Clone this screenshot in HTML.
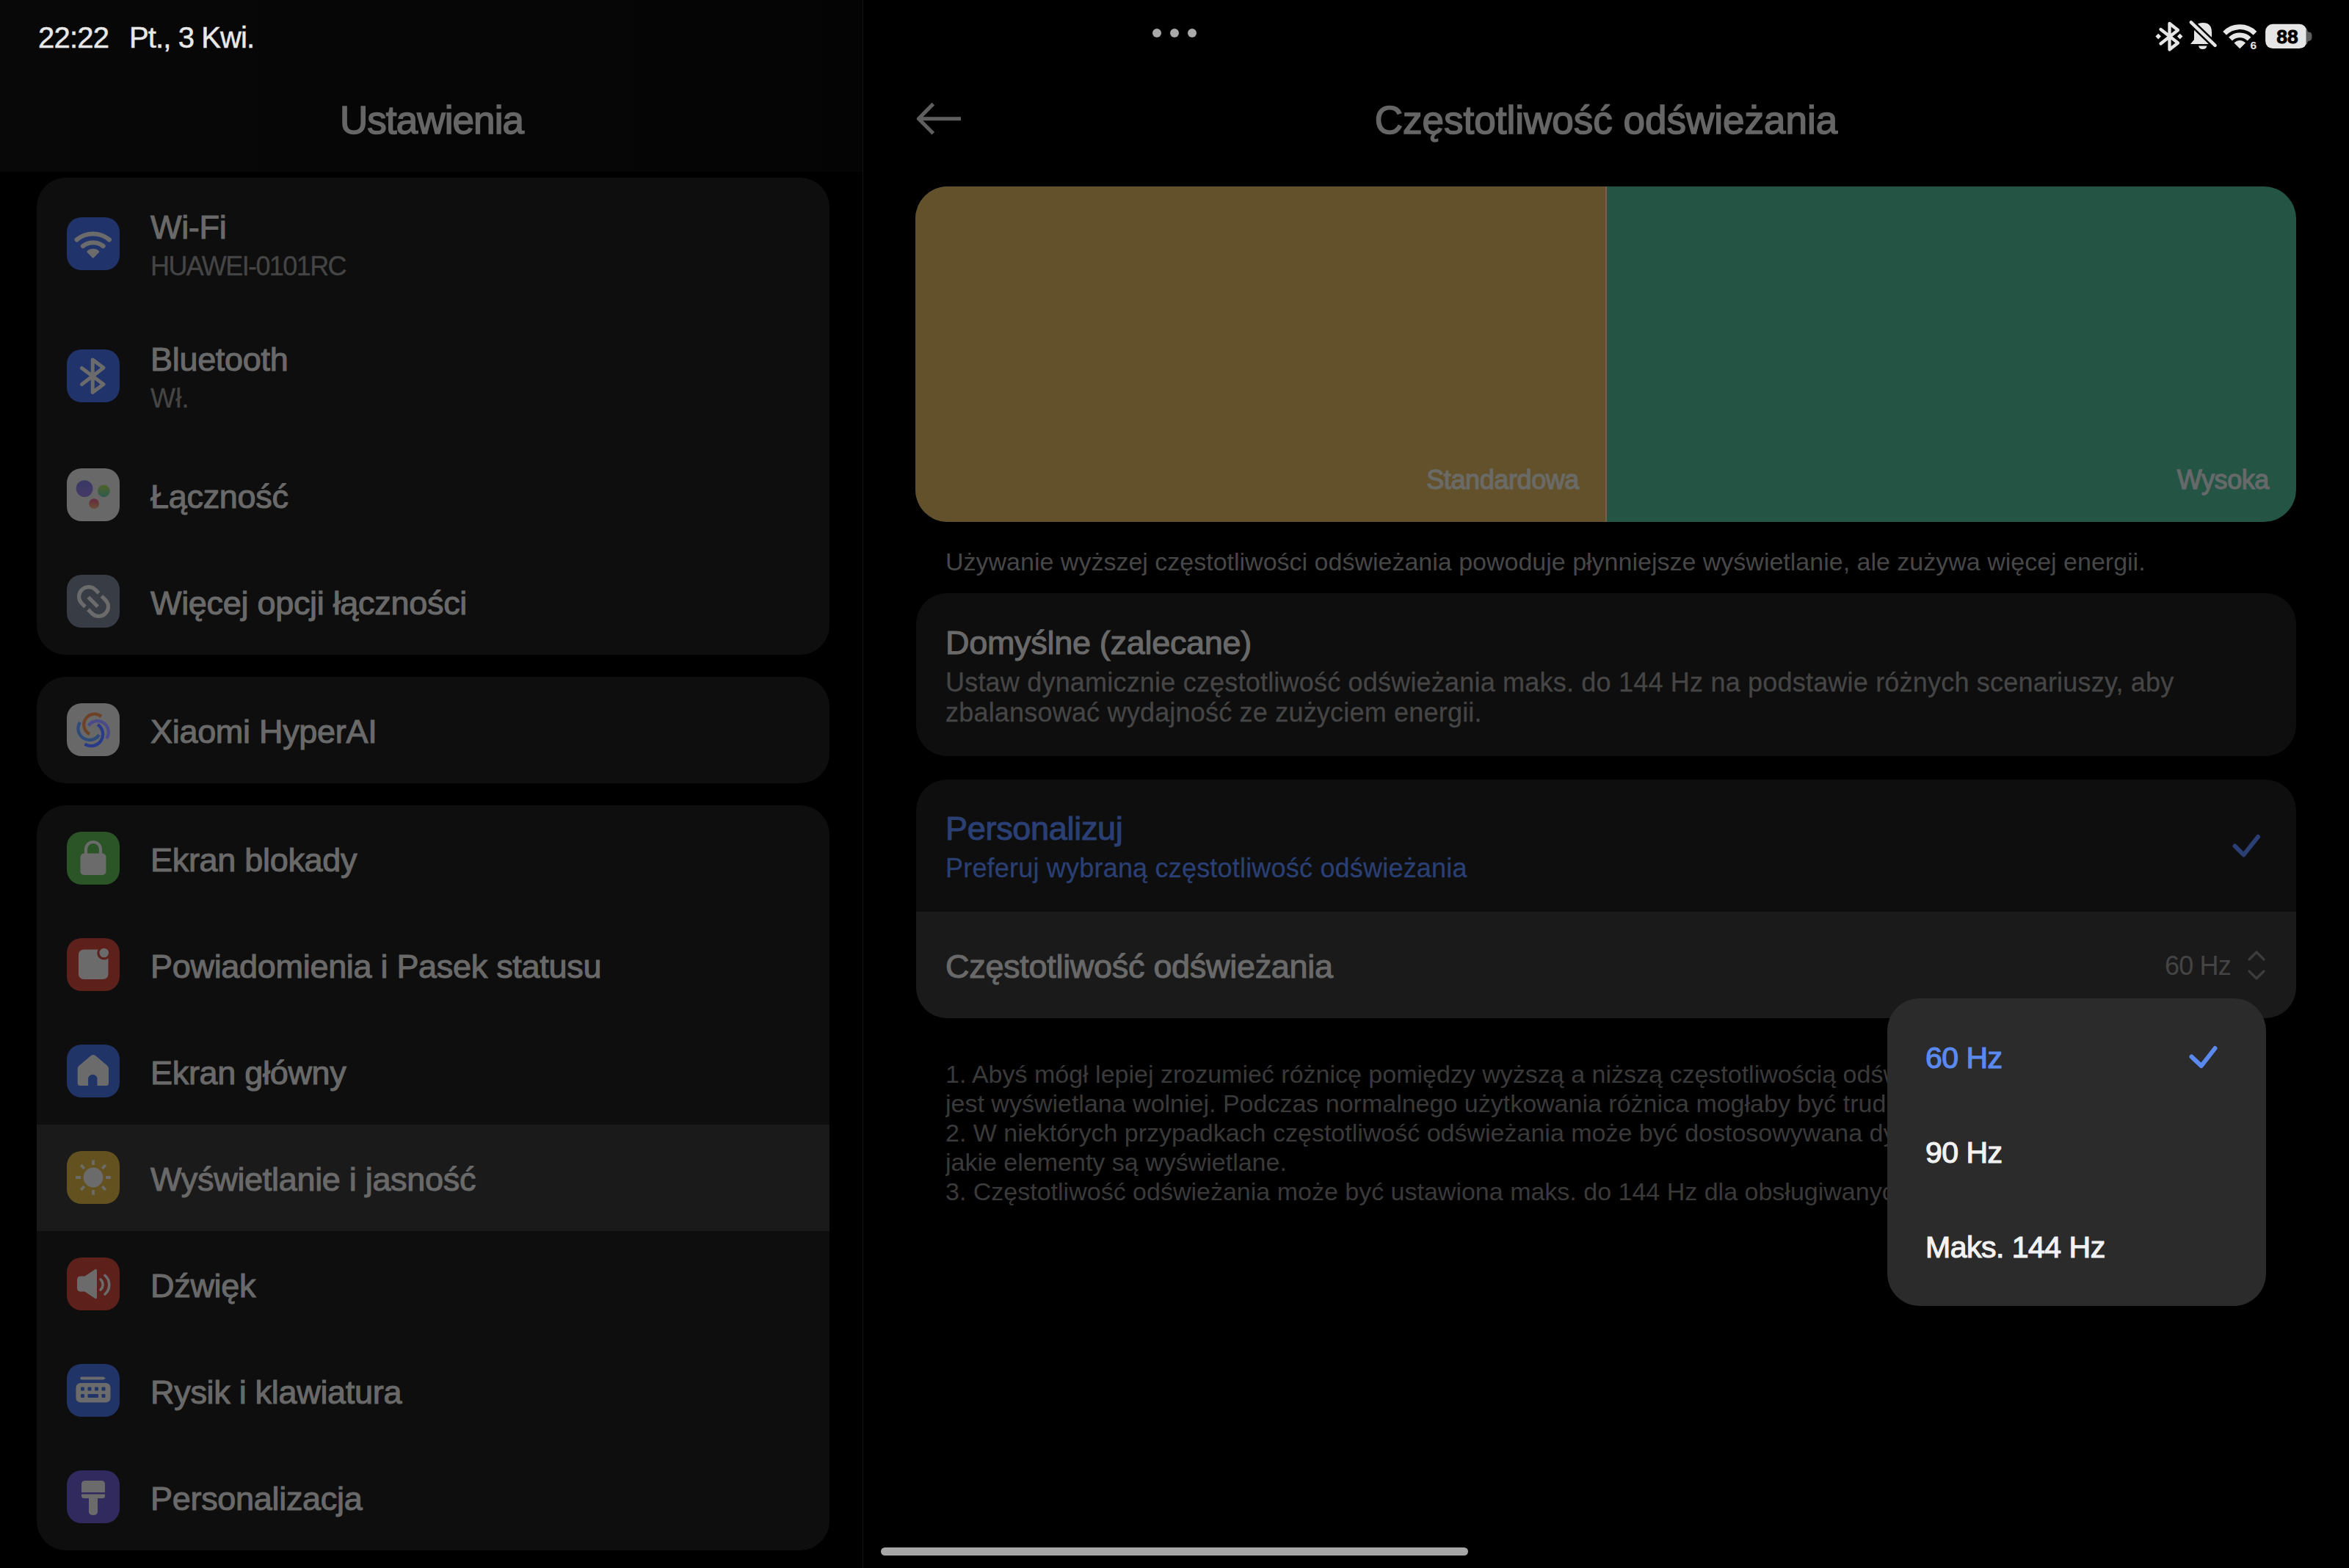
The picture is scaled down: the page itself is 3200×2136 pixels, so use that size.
<!DOCTYPE html>
<html><head><meta charset="utf-8">
<style>
*{margin:0;padding:0;box-sizing:border-box}
html,body{width:3200px;height:2136px;overflow:hidden;background:#000}
body{position:relative;font-family:"Liberation Sans",sans-serif}
.a{position:absolute}
.t{position:absolute;white-space:nowrap;line-height:1}
.ttl{position:absolute;white-space:nowrap;line-height:1;left:155px;font-size:45px;letter-spacing:-0.3px;color:#696969;-webkit-text-stroke:1.1px currentColor}
.sub{position:absolute;white-space:nowrap;line-height:1;left:155px;font-size:36px;letter-spacing:0.2px;color:#454545;-webkit-text-stroke:0.3px currentColor}
.card{position:absolute;background:#0e0e0e;border-radius:40px;overflow:hidden}
.ic{position:absolute;left:41px;width:72px;height:72px;border-radius:20px}
.ic svg{position:absolute;left:0;top:0;width:72px;height:72px}
.row{position:absolute;left:0;width:1080px}
</style></head>
<body>
<!-- left header bg -->
<div class="a" style="left:0;top:0;width:1175px;height:234px;background:linear-gradient(90deg,#080808 0%,#060606 50%,#040404 100%)"></div>
<!-- divider -->
<div class="a" style="left:1175px;top:0;width:1px;height:2136px;background:#141414"></div>

<!-- status bar -->
<div class="t" style="left:52px;top:31px;font-size:40px;color:#e8e8e8;letter-spacing:-0.8px;-webkit-text-stroke:0.5px #e8e8e8">22:22</div>
<div class="t" style="left:176px;top:31px;font-size:40px;color:#e8e8e8;letter-spacing:-0.9px;-webkit-text-stroke:0.5px #e8e8e8">Pt., 3 Kwi.</div>
<div class="a" style="left:1570px;top:39px;width:12px;height:12px;border-radius:6px;background:#aaa"></div>
<div class="a" style="left:1594px;top:39px;width:12px;height:12px;border-radius:6px;background:#aaa"></div>
<div class="a" style="left:1618px;top:39px;width:12px;height:12px;border-radius:6px;background:#aaa"></div>

<!-- left title -->
<div class="t" style="left:0;width:1176px;text-align:center;top:137px;font-size:53px;letter-spacing:-0.9px;color:#666;-webkit-text-stroke:1.6px #666">Ustawienia</div>

<!-- card 1 -->
<div class="card" style="left:50px;top:242px;width:1080px;height:650px">
  <div class="row" style="top:0;height:180px">
    <div class="ic" style="top:54px;background:#20336a"><svg viewBox="0 0 72 72">
      <path d="M13.6 30.5A34.6 34.6 0 0 1 57.8 30.5M22 39.2A22.6 22.6 0 0 1 49.6 39.2" fill="none" stroke="#6b6b6b" stroke-width="6.2" stroke-linecap="round"/>
      <path d="M35.8 54.5L28.6 46.9A10.5 10.5 0 0 1 43 46.9Z" fill="#6b6b6b" stroke="#6b6b6b" stroke-width="2.4" stroke-linejoin="round"/>
    </svg></div>
    <div class="ttl" style="top:45px">Wi-Fi</div>
    <div class="sub" style="top:103px;letter-spacing:-1.6px">HUAWEI-0101RC</div>
  </div>
  <div class="row" style="top:180px;height:180px">
    <div class="ic" style="top:54px;background:#20336a"><svg viewBox="0 0 72 72">
      <path d="M20.5 25.5L50 47.5L35.2 58.5L35.2 14L50 25L20.5 47.5" fill="none" stroke="#6b6b6b" stroke-width="5" stroke-linecap="round" stroke-linejoin="round"/>
    </svg></div>
    <div class="ttl" style="top:45px">Bluetooth</div>
    <div class="sub" style="top:103px">Wł.</div>
  </div>
  <div class="row" style="top:360px;height:145px">
    <div class="ic" style="top:36px;background:#686868"><svg viewBox="0 0 72 72">
      <defs>
        <linearGradient id="gp" x1="0" y1="0" x2="0" y2="1"><stop offset="0" stop-color="#383866"/><stop offset="1" stop-color="#453a66"/></linearGradient>
        <linearGradient id="gg" x1="0" y1="0" x2="0" y2="1"><stop offset="0" stop-color="#4f6228"/><stop offset="1" stop-color="#2e5a4e"/></linearGradient>
        <linearGradient id="gr" x1="0" y1="0" x2="0" y2="1"><stop offset="0" stop-color="#652b40"/><stop offset="1" stop-color="#6b4d33"/></linearGradient>
      </defs>
      <circle cx="24.1" cy="27.6" r="11.4" fill="url(#gp)"/>
      <circle cx="50.4" cy="30.9" r="8.3" fill="url(#gg)"/>
      <circle cx="37.1" cy="48.2" r="6.9" fill="url(#gr)"/>
    </svg></div>
    <div class="ttl" style="top:52px">Łączność</div>
  </div>
  <div class="row" style="top:505px;height:145px">
    <div class="ic" style="top:36px;background:#383c45"><svg viewBox="0 0 72 72">
      <path d="M43.6 25L38.3 19.7A13.2 13.2 0 0 0 19.7 38.3L25 43.6M29 47.4L34.3 52.7A13 13 0 0 0 52.7 34.3L47.4 29M29.3 30.5L42.2 43.4" fill="none" stroke="#6b6b6b" stroke-width="5.2" stroke-linecap="butt"/>
    </svg></div>
    <div class="ttl" style="top:52px">Więcej opcji łączności</div>
  </div>
</div>
<!-- card 2 -->
<div class="card" style="left:50px;top:922px;width:1080px;height:145px">
  <div class="row" style="top:0;height:145px">
    <div class="ic" style="top:36px;background:#686868"><svg viewBox="0 0 72 72">
      <g fill="none" stroke-width="4.3" stroke-linecap="butt">
        <path d="M47 18A14.5 14.5 0 1 0 31 42" stroke="#6e4227"/>
        <path d="M29.5 30.5A14.5 14.5 0 1 1 54 48" stroke="#4a4a8a"/>
        <path d="M42 29A14.5 14.5 0 1 1 24.5 55.5" stroke="#2a3a8a"/>
        <path d="M44 43A14.5 14.5 0 1 1 18 26" stroke="#2d4a7a"/>
      </g>
    </svg></div>
    <div class="ttl" style="top:52px">Xiaomi HyperAI</div>
  </div>
</div>
<!-- card 3 -->
<div class="card" style="left:50px;top:1097px;width:1080px;height:1015px">
  <div class="row" style="top:0;height:145px">
    <div class="ic" style="top:36px;background:#2b5526"><svg viewBox="0 0 72 72">
      <path d="M26 33V24A10 10 0 0 1 46 24V33" fill="none" stroke="#6b6b6b" stroke-width="4.2"/>
      <rect x="18.5" y="29.5" width="35" height="29.5" rx="5" fill="#6b6b6b"/>
    </svg></div>
    <div class="ttl" style="top:52px">Ekran blokady</div>
  </div>
  <div class="row" style="top:145px;height:145px">
    <div class="ic" style="top:36px;background:#5e201b"><svg viewBox="0 0 72 72">
      <rect x="16" y="15.5" width="40.5" height="40.5" rx="7" fill="#6b6b6b"/>
      <circle cx="50.7" cy="20" r="9.5" fill="#5e201b"/>
      <circle cx="50.7" cy="20" r="6.3" fill="#6b6b6b"/>
    </svg></div>
    <div class="ttl" style="top:52px">Powiadomienia i Pasek statusu</div>
  </div>
  <div class="row" style="top:290px;height:145px">
    <div class="ic" style="top:36px;background:#213468"><svg viewBox="0 0 72 72">
      <path d="M14.7 33Q14.7 30.5 17 28.5L33 15Q36 12.8 39 15L55 28.5Q57 30.5 57 33V52.5Q57 56 53.5 56H41.5V47A6.2 6.2 0 0 0 29.1 47V56H18.2Q14.7 56 14.7 52.5Z" fill="#6b6b6b"/>
    </svg></div>
    <div class="ttl" style="top:52px">Ekran główny</div>
  </div>
  <div class="row" style="top:435px;height:145px;background:#1a1a1a">
    <div class="ic" style="top:36px;background:#63521f"><svg viewBox="0 0 72 72">
      <circle cx="36" cy="36" r="13.4" fill="#6b6b6b"/>
      <g stroke="#6b6b6b" stroke-width="3.8" stroke-linecap="butt">
        <path d="M36 12.2V19M36 53V59.8M12.2 36H19M53 36H59.8M19.2 19.2L23.9 23.9M48.1 48.1L52.8 52.8M52.8 19.2L48.1 23.9M23.9 48.1L19.2 52.8"/>
      </g>
    </svg></div>
    <div class="ttl" style="top:52px">Wyświetlanie i jasność</div>
  </div>
  <div class="row" style="top:580px;height:145px">
    <div class="ic" style="top:36px;background:#5e201b"><svg viewBox="0 0 72 72">
      <path d="M14 30.5Q14 25.5 19 25.5H24.5L38 16.5Q41 14.5 41 18V54Q41 57.5 38 55.5L24.5 46.5H19Q14 46.5 14 41.5Z" fill="#6b6b6b"/>
      <path d="M46 30A9.5 9.5 0 0 1 46 44M52 24.5A17 17 0 0 1 52 50" fill="none" stroke="#6b6b6b" stroke-width="3.6" stroke-linecap="round"/>
    </svg></div>
    <div class="ttl" style="top:52px">Dźwięk</div>
  </div>
  <div class="row" style="top:725px;height:145px">
    <div class="ic" style="top:36px;background:#213468"><svg viewBox="0 0 72 72">
      <path d="M20 17.5H50L53 19.5L50 21.5H20Q18.3 21.5 18.3 19.5Q18.3 17.5 20 17.5Z" fill="#6b6b6b"/>
      <rect x="12.5" y="26" width="47" height="26.5" rx="6" fill="#6b6b6b"/>
      <g fill="#213468"><rect x="19" y="31.5" width="5" height="5" rx="1"/><rect x="28.5" y="31.5" width="5" height="5" rx="1"/><rect x="38" y="31.5" width="5" height="5" rx="1"/><rect x="47.5" y="31.5" width="5" height="5" rx="1"/><rect x="19" y="41" width="5" height="5" rx="1"/><rect x="28.5" y="41" width="14.5" height="5" rx="1"/><rect x="47.5" y="41" width="5" height="5" rx="1"/></g>
    </svg></div>
    <div class="ttl" style="top:52px">Rysik i klawiatura</div>
  </div>
  <div class="row" style="top:870px;height:145px">
    <div class="ic" style="top:36px;background:#302a5e"><svg viewBox="0 0 72 72">
      <path d="M20 19Q20 14 25 14H47Q52 14 52 19V30H20Z" fill="#6b6b6b"/>
      <path d="M20 32.5H52V35Q52 38 49 38H42V56Q42 61 36 61Q30 61 30 56V38H23Q20 38 20 35Z" fill="#6b6b6b"/>
    </svg></div>
    <div class="ttl" style="top:52px">Personalizacja</div>
  </div>
</div>

<!-- right header -->
<svg class="a" style="left:1240px;top:130px" width="80" height="64" viewBox="0 0 80 64">
  <path d="M69 31.7H12.5M31.3 11.6L11.4 31.7L31.3 51.8" fill="none" stroke="#5f5f5f" stroke-width="5.1" stroke-linecap="butt" stroke-linejoin="round"/>
</svg>
<div class="t" style="left:1176px;width:2024px;text-align:center;top:137px;font-size:53px;color:#666;-webkit-text-stroke:1.6px #666">Częstotliwość odświeżania</div>

<!-- status icons -->
<svg class="a" style="left:2930px;top:24px" width="230" height="52" viewBox="0 0 230 52">
  <g fill="none" stroke="#e6e6e6" stroke-width="4.3" stroke-linecap="round" stroke-linejoin="round">
    <path d="M13.5 16L37 34.5L25.5 43.5V8L37 17L13.5 35.5"/>
  </g>
  <path d="M10.2 21.8L14 25.6L10.2 29.4L6.4 25.6Z M39.7 21.8L43.5 25.6L39.7 29.4L35.9 25.6Z" fill="#e6e6e6"/>
  <path d="M54 36L59 30V20Q59 7 71 7Q83 7 83 20V30L88 36Z M65 38.5H76.5Q75.5 43 70.8 43Q66 43 65 38.5Z" fill="#e6e6e6"/>
  <path d="M54.3 5.8L88.1 38.4" stroke="#000" stroke-width="9.5" stroke-linecap="round"/>
  <path d="M54.8 6.3L87.6 37.9" stroke="#e6e6e6" stroke-width="4.5" stroke-linecap="round"/>
  <path d="M100.6 21.3A29.25 29.25 0 0 1 142 21.3M108.5 29.2A18.05 18.05 0 0 1 134.1 29.2" fill="none" stroke="#e6e6e6" stroke-width="6.8"/>
  <path d="M121.3 41.8L114 34.5A10.3 10.3 0 0 1 128.6 34.5Z" fill="#e6e6e6" stroke="#e6e6e6" stroke-width="1" stroke-linejoin="round"/>
  <text x="139.8" y="42.7" text-anchor="middle" font-family="Liberation Sans" font-weight="bold" font-size="15.5" fill="#e6e6e6">6</text>
  <rect x="156.1" y="8.7" width="56.4" height="33.4" rx="10" fill="#e6e6e6"/>
  <path d="M211.5 15.5H213Q213 20 217 20Q219.5 20.5 219.5 25.5Q219.5 30.5 217 31.4Q213 31.4 213 36H211.5Z" fill="#5e5e5e"/>
  <text x="186" y="35.3" text-anchor="middle" font-family="Liberation Sans" font-weight="bold" font-size="26.5" fill="#000" stroke="#000" stroke-width="0.8">88</text>
</svg>

<!-- banner -->
<div class="a" style="left:1247px;top:254px;width:1881px;height:457px;border-radius:44px;overflow:hidden;background:#245443">
  <div class="a" style="left:0;top:0;width:940px;height:457px;background:#63512c"></div>
  <div class="a" style="left:940px;top:0;width:2px;height:457px;background:#6a6450"></div>
  <div class="t" style="right:977px;top:382px;font-size:36px;letter-spacing:-0.4px;color:#6a6a66;-webkit-text-stroke:1.3px #6a6a66">Standardowa</div>
  <div class="t" style="right:37px;top:382px;font-size:36px;letter-spacing:-0.4px;color:#66696a;-webkit-text-stroke:1.3px #66696a">Wysoka</div>
</div>

<div class="t" style="left:1288px;top:748px;font-size:34px;color:#474747">Używanie wyższej częstotliwości odświeżania powoduje płynniejsze wyświetlanie, ale zużywa więcej energii.</div>

<!-- Domyślne card -->
<div class="card" style="left:1248px;top:808px;width:1880px;height:222px;border-radius:42px">
  <div class="ttl" style="left:40px;top:45px">Domyślne (zalecane)</div>
  <div class="sub" style="left:40px;top:104px">Ustaw dynamicznie częstotliwość odświeżania maks. do 144 Hz na podstawie różnych scenariuszy, aby</div>
  <div class="sub" style="left:40px;top:145px">zbalansować wydajność ze zużyciem energii.</div>
</div>

<!-- Personalizuj card -->
<div class="card" style="left:1248px;top:1062px;width:1880px;height:325px;border-radius:42px">
  <div class="ttl" style="left:40px;top:44px;color:#2a3f73;-webkit-text-stroke:1.1px #2a3f73">Personalizuj</div>
  <div class="sub" style="left:40px;top:103px;color:#2a3f73">Preferuj wybraną częstotliwość odświeżania</div>
  <svg class="a" style="left:1785px;top:68px" width="48" height="44" viewBox="0 0 48 44">
    <path d="M11.5 22.5L23.5 34.5L43 10" fill="none" stroke="#2a3f73" stroke-width="6" stroke-linecap="round" stroke-linejoin="round"/>
  </svg>
  <div class="a" style="left:0;top:180px;width:1880px;height:145px;background:#1a1a1a">
    <div class="ttl" style="left:40px;top:52px">Częstotliwość odświeżania</div>
    <div class="t" style="right:89px;top:56px;font-size:36px;letter-spacing:-0.8px;color:#444">60 Hz</div>
    <svg class="a" style="left:1808px;top:46px" width="36" height="56" viewBox="0 0 36 56">
      <path d="M8 19L18 9L28 19M8 35L18 45L28 35" fill="none" stroke="#3c3c3c" stroke-width="3.2" stroke-linecap="round" stroke-linejoin="round"/>
    </svg>
  </div>
</div>

<!-- footnotes -->
<div class="a" style="left:1288px;top:1446px;width:1283px;height:220px;overflow:hidden">
  <div class="t" style="left:0;top:0;font-size:34px;color:#3a3a3a;line-height:40px;top:-3px">1. Abyś mógł lepiej zrozumieć różnicę pomiędzy wyższą a niższą częstotliwością odświeżania, animacja<br>jest wyświetlana wolniej. Podczas normalnego użytkowania różnica mogłaby być trudniejsza<br>2. W niektórych przypadkach częstotliwość odświeżania może być dostosowywana dynamicznie<br>jakie elementy są wyświetlane.<br>3. Częstotliwość odświeżania może być ustawiona maks. do 144 Hz dla obsługiwanych aplikacji.</div>
</div>

<!-- popup -->
<div class="a" style="left:2571px;top:1360px;width:516px;height:419px;border-radius:44px;background:#2b2b2b">
  <div class="t" style="left:52px;top:61px;font-size:41px;color:#5a8af0;-webkit-text-stroke:1.2px #5a8af0;letter-spacing:-0.5px">60 Hz</div>
  <svg class="a" style="left:405px;top:58px" width="50" height="44" viewBox="0 0 50 44">
    <path d="M9.5 21.5L22.8 34L41.5 10" fill="none" stroke="#5a8af0" stroke-width="6" stroke-linecap="round" stroke-linejoin="round"/>
  </svg>
  <div class="t" style="left:52px;top:189.5px;font-size:41px;color:#f2f2f2;-webkit-text-stroke:1.2px #f2f2f2;letter-spacing:-0.5px">90 Hz</div>
  <div class="t" style="left:52px;top:319px;font-size:41px;color:#f2f2f2;-webkit-text-stroke:1.2px #f2f2f2;letter-spacing:-0.5px">Maks. 144 Hz</div>
</div>

<!-- home bar -->
<div class="a" style="left:1200px;top:2108px;width:800px;height:11px;border-radius:6px;background:#a6a6a6"></div>
</body></html>
